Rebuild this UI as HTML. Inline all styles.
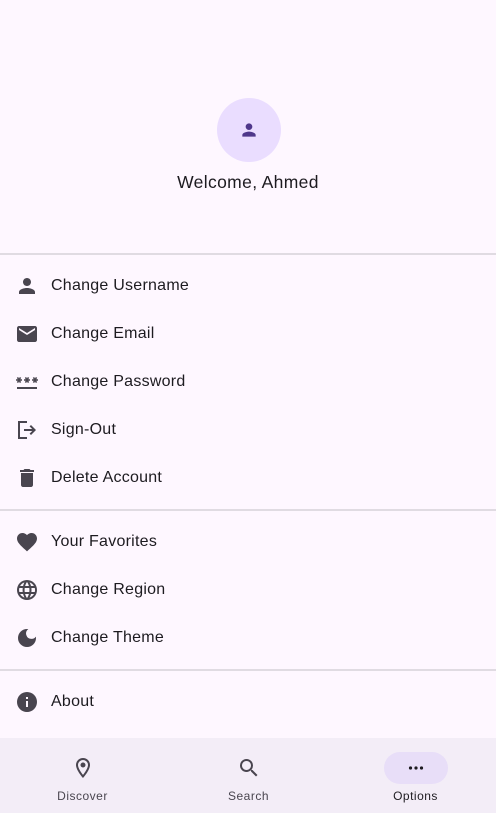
<!DOCTYPE html>
<html><head><meta charset="utf-8"><style>
*{margin:0;padding:0;box-sizing:border-box}
body{width:496px;height:813px;background:#fef7ff;font-family:"Liberation Sans",sans-serif;color:#1d1b20;position:relative;overflow:hidden}
.avatar{position:absolute;left:217px;top:98px;width:64px;height:64px;border-radius:50%;background:#eaddff;display:flex;align-items:center;justify-content:center}
.welcome{position:absolute;top:172px;width:100%;text-align:center;font-size:17.5px;color:#1d1b20;letter-spacing:.35px}
.hr{position:absolute;left:0;width:496px;height:2px;background:#e0dbe2}
.item{position:absolute;left:0;width:496px;height:48px;display:flex;align-items:center}
.item svg{position:absolute;left:15px;width:24px;height:24px;fill:#49454f}
.item span{position:absolute;left:51px;top:15px;font-size:16px;letter-spacing:.25px;color:#1d1b20}
.nav{position:absolute;left:0;top:738px;width:496px;height:75px;background:#f3edf7}
.tab{position:absolute;top:0;width:165px;height:75px;text-align:center}
.tab svg{position:absolute;top:18px;left:50%;margin-left:-12px;width:24px;height:24px;fill:#49454f}
.tab span{position:absolute;top:51px;left:0;width:100%;font-size:12px;letter-spacing:.5px;color:#49454f}
.pill{position:absolute;top:14px;left:50%;margin-left:-32px;width:64px;height:32px;border-radius:16px;background:#e8def8}
</style></head><body>
<div class="avatar"><svg width="24" height="24" viewBox="0 0 24 24" fill="#4f378b"><path d="M12 12c2.2 0 4-1.8 4-4s-1.8-4-4-4-4 1.8-4 4 1.8 4 4 4zm0 2c-2.7 0-8 1.3-8 4v2h16v-2c0-2.7-5.3-4-8-4z" transform="translate(2 2) scale(.833)"/></svg></div>
<div class="welcome">Welcome, Ahmed</div>
<div class="hr" style="top:253px"></div>
<div class="item" style="top:262px"><svg viewBox="0 0 24 24"><path d="M12 12c2.2 0 4-1.8 4-4s-1.8-4-4-4-4 1.8-4 4 1.8 4 4 4zm0 2c-2.7 0-8 1.3-8 4v2h16v-2c0-2.7-5.3-4-8-4z"/></svg><span>Change Username</span></div>
<div class="item" style="top:310px"><svg viewBox="0 0 24 24"><path d="M20 4H4c-1.1 0-2 .9-2 2v12c0 1.1.9 2 2 2h16c1.1 0 2-.9 2-2V6c0-1.1-.9-2-2-2zm0 4l-8 5-8-5V6l8 5 8-5v2z"/></svg><span>Change Email</span></div>
<div class="item" style="top:358px"><svg viewBox="0 0 24 24"><path d="M2 17h20v2H2zm1.15-4.05L4 11.47l.85 1.48 1.3-.75-.85-1.48H7v-1.5H5.3l.85-1.47L4.85 7 4 8.47 3.15 7l-1.3.75.85 1.47H1v1.5h1.7l-.85 1.48 1.3.75zm6.7-.75l1.3.75.85-1.48.85 1.48 1.3-.75-.85-1.48H15v-1.5h-1.7l.85-1.47-1.3-.75L12 8.47 11.15 7l-1.3.75.85 1.47H9v1.5h1.7l-.85 1.48zM23 9.22h-1.7l.85-1.47-1.3-.75L20 8.47 19.15 7l-1.3.75.85 1.47H17v1.5h1.7l-.85 1.48 1.3.75.85-1.48.85 1.48 1.3-.75-.85-1.48H23v-1.5z"/></svg><span>Change Password</span></div>
<div class="item" style="top:406px"><svg viewBox="0 0 24 24"><path d="M3 3h9v2H5v14h7v2H3zM16 7l5 5-5 5-1.4-1.4 2.6-2.6H9v-2h8.2l-2.6-2.6z"/></svg><span>Sign-Out</span></div>
<div class="item" style="top:454px"><svg viewBox="0 0 24 24"><path d="M6 19c0 1.1.9 2 2 2h8c1.1 0 2-.9 2-2V7H6v12zM19 4h-3.5l-1-1h-5l-1 1H5v2h14V4z"/></svg><span>Delete Account</span></div>
<div class="hr" style="top:509px"></div>
<div class="item" style="top:518px"><svg viewBox="0 0 24 24"><path d="M12 21.35l-1.45-1.32C5.4 15.36 2 12.28 2 8.5 2 5.42 4.42 3 7.5 3c1.740 0 3.41.81 4.5 2.09C13.09 3.81 14.76 3 16.5 3 19.58 3 22 5.42 22 8.5c0 3.78-3.4 6.860-8.55 11.54L12 21.35z"/></svg><span>Your Favorites</span></div>
<div class="item" style="top:566px"><svg viewBox="0 0 24 24"><path d="M12 2a10 10 0 100 20 10 10 0 000-20zm6.9 6h-2.9a15.6 15.6 0 00-1.4-3.6A8 8 0 0118.9 8zM12 4c.8 1.2 1.5 2.5 1.9 4h-3.8c.4-1.4 1.1-2.8 1.9-4zM4.3 14a8.2 8.2 0 010-4h3.4a16.5 16.5 0 000 4H4.3zm.8 2h3a15.6 15.6 0 001.4 3.6A8 8 0 015.1 16zm3-8h-3a8 8 0 014.3-3.6C8.8 5.5 8.4 6.7 8.1 8zM12 20c-.8-1.2-1.5-2.5-1.9-4h3.8c-.4 1.4-1.1 2.8-1.900 4zm2.3-6H9.7a14.7 14.7 0 010-4h4.6a14.7 14.7 0 010 4zm.3 5.6c.6-1.1 1.1-2.3 1.4-3.6h3a8 8 0 01-4.4 3.6zm1.8-5.6a16.5 16.5 0 000-4h3.4a8.2 8.2 0 010 4h-3.4z"/></svg><span>Change Region</span></div>
<div class="item" style="top:614px"><svg viewBox="0 0 24 24"><path d="M12 3a9 9 0 109 9c0-.46-.04-.92-.1-1.36a5.39 5.39 0 01-4.4 2.26 5.4 5.4 0 01-3.14-9.8A9 9 0 0012 3z"/></svg><span>Change Theme</span></div>
<div class="hr" style="top:669px"></div>
<div class="item" style="top:678px"><svg viewBox="0 0 24 24"><path d="M12 2a10 10 0 100 20 10 10 0 000-20zm1 15h-2v-6h2v6zm0-8h-2V7h2v2z"/></svg><span>About</span></div>
<div class="nav">
<div class="tab" style="left:0"><svg viewBox="0 0 24 24"><path d="M12 2a7 7 0 00-7 7c0 5.2 7 13 7 13s7-7.8 7-13a7 7 0 00-7-7zm0 2a5 5 0 015 5c0 2.9-2.9 7.2-5 9.9C9.9 16.2 7 11.9 7 9a5 5 0 015-5zm0 2.5a2.5 2.5 0 100 5 2.5 2.5 0 000-5z"/></svg><span>Discover</span></div>
<div class="tab" style="left:166px"><svg viewBox="0 0 24 24"><path d="M15.5 14h-.79l-.28-.27A6.47 6.47 0 0016 9.5 6.5 6.5 0 109.5 16c1.61 0 3.09-.59 4.23-1.57l.27.28v.79l5 4.99L20.49 19l-4.99-5zm-6 0C7.01 14 5 11.99 5 9.5S7.01 5 9.5 5 14 7.01 14 9.5 11.99 14 9.5 14z"/></svg><span>Search</span></div>
<div class="tab" style="left:333px"><div class="pill"></div><svg viewBox="0 0 24 24" style="fill:#1d1b20"><circle cx="6.5" cy="12" r="1.6"/><circle cx="12" cy="12" r="1.6"/><circle cx="17.5" cy="12" r="1.6"/></svg><span style="color:#1d1b20">Options</span></div>
</div>
</body></html>
